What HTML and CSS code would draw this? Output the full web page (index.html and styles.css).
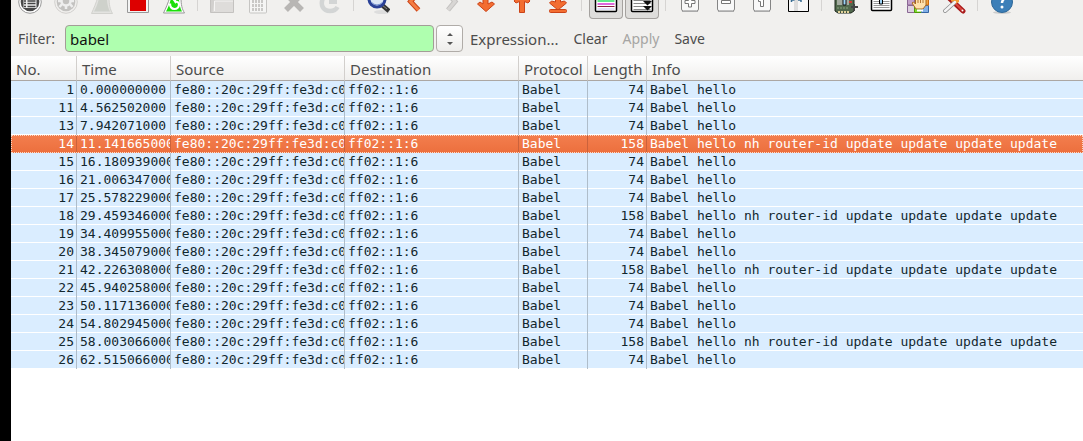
FILE: index.html
```html
<!DOCTYPE html>
<html lang="en">
<head>
<meta charset="utf-8">
<title>Packet capture</title>
<link rel="stylesheet" href="styles.css">
</head>
<body>
<main class="window">
  <div class="toolbar" role="toolbar" aria-label="Main">
    <button class="tool" aria-label="Interfaces"><svg class="icon" viewBox="0 0 24 15"><circle cx="12" cy="2" r="11.300" fill="#fff" stroke="#999"/><circle cx="12" cy="2" r="9.300" fill="#484848"/><path d="M5.500 0h13v8h-13z" fill="#eee"/><path d="M9.500 1h8M9.500 3.500h8M9.500 6.500h8M6 1h2M6 3.500h2M6 6.500h2" stroke="#444" stroke-width="1.500"/></svg></button>
    <button class="tool" aria-label="Options"><svg class="icon" viewBox="0 0 24 15"><circle cx="12" cy="2" r="11.300" fill="#f0efed" stroke="#d2d0ce"/><circle cx="12" cy="2" r="9.300" fill="#c3c2c0"/><circle cx="12" cy="1" r="4.500" fill="none" stroke="#eee" stroke-width="2.500"/><path d="M12 5v4M8 4L5.500 7M16 4l2.500 3M7 1H4M17 1h3" stroke="#eee" stroke-width="2.500"/></svg></button>
    <button class="tool" aria-label="Start"><svg class="icon" viewBox="0 0 24 15"><path d="M8-3C6 3 4 8 1.500 13.500h21C20 9 19 5 19-3z" fill="#e3e3e0" stroke="#d2d2ce"/><path d="M9-2C8 3 6 8 4 11.500h16C18 8 17 3 17-2z" fill="#ced1cb"/></svg></button>
    <button class="tool" aria-label="Stop"><svg class="icon" viewBox="0 0 24 15"><path d="M1.500-9h21v21.500h-21z" fill="#f3f3f3" stroke="#999"/><path d="M4-6h16v17H4z" fill="#d00"/></svg></button>
    <button class="tool" aria-label="Restart"><svg class="icon" viewBox="0 0 24 15"><path d="M8-3C6 3 4 8 1.500 13h21C20 9 19 5 19-3z" fill="#fff" stroke="#999"/><path d="M9-2C8 3 6 8 4 11.500h16C18 8 17 3 17-2z" fill="#1cdf0b"/><path d="M8 3.500C8 7 10 9 12.500 9S17 7 17 4.500 15 1.500 12.500 1.500" fill="none" stroke="#fff" stroke-width="2.200"/><path d="M9-2h5v6z" fill="#fff"/></svg></button>
    <span class="separator"></span>
    <button class="tool" aria-label="Open"><svg class="icon" viewBox="0 0 24 15"><path d="M.500-4h23v16.500H.500z" fill="#d2d0ce" stroke="#c4c2c0"/><path d="M4.500 1h18.500v11H2.500z" fill="#dedcda"/><path d="M4.500 11V1H23" fill="none" stroke="#f5f4f3"/></svg></button>
    <button class="tool" aria-label="Save capture"><svg class="icon" viewBox="0 0 24 15"><rect x="3.500" y="-8" width="17" height="21" rx="1" fill="#f5f5f4" stroke="#c6c5c3"/><path d="M6 1.500h12M6 5.500h12M6 9.500h12" stroke="#c9c8c6" stroke-width="3" stroke-dasharray="2 1"/></svg></button>
    <button class="tool" aria-label="Close"><svg class="icon" viewBox="0 0 24 15"><path d="M4-6l16 16M20-6L4 10" stroke="#b8b6b4" stroke-width="5.500"/></svg></button>
    <button class="tool" aria-label="Reload"><svg class="icon" viewBox="0 0 24 15"><path d="M5-2C2 5 5 11 12 11c4 0 6-1 7.500-4" fill="none" stroke="#d3d5d5" stroke-width="4.500"/><path d="M11-1h8v5h-8z" fill="#d3d5d5"/></svg></button>
    <span class="separator"></span>
    <button class="tool" aria-label="Find"><svg class="icon" viewBox="0 0 24 15"><ellipse cx="16" cy="12" rx="8" ry="2" fill="#ddd"/><path d="M16 5l7 6" stroke="#333" stroke-width="4.500"/><path d="M16 5l5 4" stroke="#888"/><circle cx="11" cy="-1" r="8" fill="#dce6f5" stroke="#2b4197" stroke-width="3"/><path d="M5 2q6 6 12 0" fill="none" stroke="#718ccc"/></svg></button>
    <button class="tool" aria-label="Back"><svg class="icon" viewBox="0 0 24 15"><path d="M15-6L8.500 1.500l8 8.500" fill="none" stroke="#cb4317" stroke-width="5"/><path d="M15-6L8.500 1.500l8 8.500" fill="none" stroke="#f47c43" stroke-width="3"/></svg></button>
    <button class="tool" aria-label="Forward"><svg class="icon" viewBox="0 0 24 15"><path d="M10-6l7 7.500-7 8.500" fill="none" stroke="#c4c2c0" stroke-width="5"/><path d="M10-6l7 7.500-7 8.500" fill="none" stroke="#d8d6d4" stroke-width="3"/></svg></button>
    <button class="tool" aria-label="Go to packet"><svg class="icon" viewBox="0 0 24 15"><path d="M9-2h5v6l4-2 2.500 2-8.500 7.500L3.500 4 6 2l3 2z" fill="#f36d31" stroke="#cb4317" stroke-linejoin="round"/></svg></button>
    <button class="tool" aria-label="First packet"><svg class="icon" viewBox="0 0 24 15"><path d="M9.500 12.500V1.500L6 3 4 1l8-9 8 9-2 2-3.500-1.500v11z" fill="#f36d31" stroke="#cb4317" stroke-linejoin="round"/></svg></button>
    <button class="tool" aria-label="Last packet"><svg class="icon" viewBox="0 0 24 15"><path d="M9.500-2h5v4l4-1 2 2-8.500 7L3.500 3l2-2 4 1z" fill="#f36d31" stroke="#cb4317" stroke-linejoin="round"/><rect x="3.500" y="9.500" width="17" height="3" rx="1" fill="#f36d31" stroke="#cb4317"/></svg></button>
    <span class="separator"></span>
    <button class="tool tool-pressed" aria-label="Colorize" aria-pressed="true"><svg class="icon" viewBox="0 0 24 15"><rect x="1.500" y="-9" width="21" height="20.500" rx="1" fill="#fff" stroke="#000" stroke-width="1.500"/><path d="M3.500 1h17" stroke="#62ec8d" stroke-width="2"/><path d="M3.500 4h17" stroke="#de6ade" stroke-width="2"/><path d="M3.500 6.500h17" stroke="#8d2144"/><path d="M3.500 9h17" stroke="#c9c9f5"/></svg></button>
    <button class="tool tool-pressed" aria-label="Auto scroll" aria-pressed="true"><svg class="icon" viewBox="0 0 24 15"><rect x="1.500" y="-9" width="21" height="20.500" rx="1" fill="#fff" stroke="#000" stroke-width="1.500"/><path d="M3.500.500h17M3.500 3.500h17M3.500 6.500h17M3.500 9.500h17" stroke="#888"/><path d="M13 1h9l-4.500 4.500zM13 6h9l-4.500 4.500z" fill="#111"/></svg></button>
    <span class="separator"></span>
    <button class="tool" aria-label="Zoom in"><svg class="icon" viewBox="0 0 24 15"><rect x="3.500" y="-7" width="17" height="18" rx="2" fill="#f8f8f8" stroke="#858585"/><path d="M4 11.500h16" stroke="#aaa"/><path d="M10.500-3h3v3.500h3.500v3h-3.500v3.500h-3v-3.500h-3.500v-3h3.500z" fill="#fff" stroke="#777"/></svg></button>
    <button class="tool" aria-label="Zoom out"><svg class="icon" viewBox="0 0 24 15"><rect x="3.500" y="-7" width="17" height="18" rx="2" fill="#f8f8f8" stroke="#858585"/><path d="M4 11.500h16" stroke="#aaa"/><path d="M7.500.500h9v3h-9z" fill="#fff" stroke="#777"/></svg></button>
    <button class="tool" aria-label="Normal size"><svg class="icon" viewBox="0 0 24 15"><rect x="3.500" y="-7" width="17" height="18" rx="2" fill="#f8f8f8" stroke="#858585"/><path d="M4 11.500h16" stroke="#aaa"/><path d="M10.500 6.500v-5h-2v-3h5v8z" fill="#fff" stroke="#777"/></svg></button>
    <button class="tool" aria-label="Resize columns"><svg class="icon" viewBox="0 0 24 15"><path d="M2.500-9h20v20.500h-20z" fill="#f7f7f7" stroke="#000"/><path d="M8 0h4v11H8z" fill="#ddd"/><path d="M5.500 2V0h3M15 2V0h-3" fill="none" stroke="#376b91" stroke-width="1.500"/></svg></button>
    <span class="separator"></span>
    <button class="tool" aria-label="Capture filters"><svg class="icon" viewBox="0 0 24 15"><path d="M1-5h19v16l-3 2H4l-3-2z" fill="#52694d" stroke="#1d271c"/><path d="M3 0h12v5H3z" fill="#a4aba0"/><path d="M9-1h3v6H9z" fill="#9fd4f5" stroke="#111"/><path d="M15 1h3v2h-3z" fill="#cf3c35"/><path d="M3 8h12" stroke="#8ca681" stroke-dasharray="2 1"/><path d="M4 12h12" stroke="#e2d29b" stroke-width="2" stroke-dasharray="2 1"/><path d="M17 7h7M20 4v7" stroke="#444" stroke-width="2"/></svg></button>
    <button class="tool" aria-label="Display filters"><svg class="icon" viewBox="0 0 24 15"><rect x="1.500" y="-9" width="20" height="19.500" rx="1" fill="#fff" stroke="#000" stroke-width="1.500"/><path d="M3.500 1.500h16M3.500 3.500h16M3.500 5.500h16M3.500 7.500h16" stroke="#999"/><path d="M9.500-2h3v6h-3z" fill="#9fd4f5" stroke="#000"/></svg></button>
    <button class="tool" aria-label="Coloring rules"><svg class="icon" viewBox="0 0 24 15"><path d="M1.500-3h7v8h-7z" fill="#c4a1ca" stroke="#8a6794"/><path d="M1.500 5.500h7v7h-7z" fill="#ddd1df" stroke="#8a6794"/><path d="M8.500 5.500h7v7h-7z" fill="#80dc32" stroke="#4e9a06"/><path d="M15.500 5.500h7v7h-7z" fill="#82b0e7" stroke="#3465a4"/><path d="M15.500-3h7v8h-7z" fill="#f4a23c" stroke="#ce6a0c"/><path d="M9.500-2v6l-2-2-1.500 1 4 6h7l3-4V-2z" fill="#ffe1ad" stroke="#a9681e"/><path d="M12-1v4M14.500-1v4M17-1v4" stroke="#b67632"/><path d="M11 9.500h6v2h-6z" fill="#fff"/></svg></button>
    <button class="tool" aria-label="Preferences"><svg class="icon" viewBox="0 0 24 15"><path d="M6-3l15 14" stroke="#a91919" stroke-width="5" stroke-linecap="round"/><path d="M7-3l13 13" stroke="#dd4840" stroke-width="2"/><path d="M10-3h7v5l-4 2-4-3z" fill="#f39b35"/><path d="M12 3l-9 8" stroke="#888" stroke-width="4" stroke-linecap="round"/><path d="M13 2L3 11" stroke="#f4f4f4" stroke-width="2.500" stroke-linecap="round"/><circle cx="20.500" cy="10.500" r="1" fill="#fff"/></svg></button>
    <span class="separator"></span>
    <button class="tool" aria-label="Help"><svg class="icon" viewBox="0 0 24 15"><ellipse cx="12" cy="12.500" rx="9" ry="1.500" fill="#ccc"/><circle cx="12" cy="2" r="10.500" fill="#3c7fb8" stroke="#2d6798"/><path d="M9-3q6-3 5 1c0 2-2 2-2 5" fill="none" stroke="#fff" stroke-width="2.500"/><circle cx="12" cy="7" r="1.500" fill="#fff"/></svg></button>
  </div>

  <form class="filter-bar">
    <label class="filter-label" for="filter">Filter:</label>
    <input class="filter-input" id="filter" type="text" value="babel" spellcheck="false">
    <span class="history">
      <select class="history-select" aria-label="Filter history"><option></option></select>
      <svg class="history-arrows" viewBox="0 0 8 14"><path d="M1 4h6L4 1zM1 10h6l-3 3z" fill="#555"/></svg>
    </span>
    <div class="actions">
      <button class="action" type="button">Expression...</button>
      <button class="action" type="button">Clear</button>
      <button class="action" type="button" disabled>Apply</button>
      <button class="action" type="button">Save</button>
    </div>
  </form>

  <div class="packet-pane">
    <table class="packets">
      <colgroup><col class="col-no"><col class="col-time"><col class="col-address"><col class="col-address"><col class="col-protocol"><col class="col-length"><col></colgroup>
      <thead><tr><th>No.</th><th>Time</th><th>Source</th><th>Destination</th><th>Protocol</th><th>Length</th><th>Info</th></tr></thead>
      <tbody>
        <tr><td class="num">1</td><td>0.000000000</td><td>fe80::20c:29ff:fe3d:c0</td><td>ff02::1:6</td><td>Babel</td><td class="num">74</td><td>Babel hello</td></tr>
        <tr><td class="num">11</td><td>4.562502000</td><td>fe80::20c:29ff:fe3d:c0</td><td>ff02::1:6</td><td>Babel</td><td class="num">74</td><td>Babel hello</td></tr>
        <tr><td class="num">13</td><td>7.942071000</td><td>fe80::20c:29ff:fe3d:c0</td><td>ff02::1:6</td><td>Babel</td><td class="num">74</td><td>Babel hello</td></tr>
        <tr class="selected"><td class="num">14</td><td>11.141665000</td><td>fe80::20c:29ff:fe3d:c0</td><td>ff02::1:6</td><td>Babel</td><td class="num">158</td><td>Babel hello nh router-id update update update update</td></tr>
        <tr><td class="num">15</td><td>16.180939000</td><td>fe80::20c:29ff:fe3d:c0</td><td>ff02::1:6</td><td>Babel</td><td class="num">74</td><td>Babel hello</td></tr>
        <tr><td class="num">16</td><td>21.006347000</td><td>fe80::20c:29ff:fe3d:c0</td><td>ff02::1:6</td><td>Babel</td><td class="num">74</td><td>Babel hello</td></tr>
        <tr><td class="num">17</td><td>25.578229000</td><td>fe80::20c:29ff:fe3d:c0</td><td>ff02::1:6</td><td>Babel</td><td class="num">74</td><td>Babel hello</td></tr>
        <tr><td class="num">18</td><td>29.459346000</td><td>fe80::20c:29ff:fe3d:c0</td><td>ff02::1:6</td><td>Babel</td><td class="num">158</td><td>Babel hello nh router-id update update update update</td></tr>
        <tr><td class="num">19</td><td>34.409955000</td><td>fe80::20c:29ff:fe3d:c0</td><td>ff02::1:6</td><td>Babel</td><td class="num">74</td><td>Babel hello</td></tr>
        <tr><td class="num">20</td><td>38.345079000</td><td>fe80::20c:29ff:fe3d:c0</td><td>ff02::1:6</td><td>Babel</td><td class="num">74</td><td>Babel hello</td></tr>
        <tr><td class="num">21</td><td>42.226308000</td><td>fe80::20c:29ff:fe3d:c0</td><td>ff02::1:6</td><td>Babel</td><td class="num">158</td><td>Babel hello nh router-id update update update update</td></tr>
        <tr><td class="num">22</td><td>45.940258000</td><td>fe80::20c:29ff:fe3d:c0</td><td>ff02::1:6</td><td>Babel</td><td class="num">74</td><td>Babel hello</td></tr>
        <tr><td class="num">23</td><td>50.117136000</td><td>fe80::20c:29ff:fe3d:c0</td><td>ff02::1:6</td><td>Babel</td><td class="num">74</td><td>Babel hello</td></tr>
        <tr><td class="num">24</td><td>54.802945000</td><td>fe80::20c:29ff:fe3d:c0</td><td>ff02::1:6</td><td>Babel</td><td class="num">74</td><td>Babel hello</td></tr>
        <tr><td class="num">25</td><td>58.003066000</td><td>fe80::20c:29ff:fe3d:c0</td><td>ff02::1:6</td><td>Babel</td><td class="num">158</td><td>Babel hello nh router-id update update update update</td></tr>
        <tr><td class="num">26</td><td>62.515066000</td><td>fe80::20c:29ff:fe3d:c0</td><td>ff02::1:6</td><td>Babel</td><td class="num">74</td><td>Babel hello</td></tr>
      </tbody>
    </table>
  </div>
</main>
</body>
</html>
```
FILE: styles.css
```css
* {
  box-sizing: border-box;
}

body {
  margin: 0;
  padding-left: 11px;
  background: #000;
  color: #4c4c4c;
  font: 15px/20px "Noto Sans", "Open Sans", sans-serif;
}

button,
input,
select {
  margin: 0;
  font: inherit;
  color: inherit;
}

.window {
  display: flex;
  flex-direction: column;
  min-height: 100vh;
  background: #f1f0ee;
}

.toolbar {
  display: flex;
  padding: 0 1px 6px;
  overflow: hidden;
}

.tool {
  display: flex;
  flex: none;
  justify-content: center;
  width: 34px;
  margin: 0 1px;
  padding: 0 0 3px;
  border: 1px solid transparent;
  border-top: 0;
  border-radius: 0 0 4px 4px;
  background: none;
}

.tool-pressed {
  border-color: #a5a29f;
  background: #dedddb;
}

.icon {
  flex: none;
  width: 24px;
  height: 15px;
}

.separator {
  flex: none;
  width: 12px;
  height: 11px;
  background: linear-gradient(#d6d4d2, #d6d4d2) 5px 0 / 1px 100% no-repeat;
}

.filter-bar {
  display: flex;
  align-items: center;
  padding: 0 7px 4px;
}

.filter-label {
  width: 47px;
  font-size: 14px;
}

.filter-input {
  width: 369px;
  height: 27px;
  padding: 0 4px;
  border: 1px solid #a39d97;
  border-radius: 4px;
  outline: 0;
  background: #afffaf;
  color: #111;
}

.history {
  display: grid;
  place-items: center;
  width: 27px;
  height: 27px;
  margin: 0 7px 0 2px;
}

.history > * {
  grid-area: 1 / 1;
}

.history-select {
  width: 100%;
  height: 100%;
  border: 1px solid #b0aca8;
  border-radius: 4px;
  appearance: none;
  background: linear-gradient(#fff, #eeedeb);
}

.history-arrows {
  width: 8px;
  height: 14px;
  pointer-events: none;
}

.actions {
  display: flex;
  gap: 15px;
  font-size: 14px;
}

.action {
  padding: 0;
  border: 0;
  background: none;
}

.action:first-child {
  font-size: 15px;
}

.action:disabled {
  color: #a6a5a3;
}

.packet-pane {
  flex: 1;
  background: #fff;
}

.packets {
  width: 100%;
  table-layout: fixed;
  border-spacing: 0;
}

.col-no {
  width: 66px;
}

.col-time {
  width: 94px;
}

.col-address {
  width: 174px;
}

.col-protocol {
  width: 69px;
}

.col-length {
  width: 59px;
}

th,
td {
  overflow: hidden;
  white-space: nowrap;
  border-right: 1px solid #d2cfcc;
}

th {
  height: 25px;
  padding: 1px 0 0 5px;
  border-bottom: 1px solid #aca7a3;
  background: linear-gradient(#fff, #f0efed);
  font-weight: 400;
  text-align: left;
}

td {
  height: 18px;
  padding: 0 2px 0 3px;
  border-color: #afbdca;
  background: #daedff;
  box-shadow: inset 0 -1px #fff;
  color: #12272e;
  font: 13px/18px "DejaVu Sans Mono", monospace;
}

th:last-child,
td:last-child {
  border-right: 0;
}

.num {
  text-align: right;
}

.selected {
  outline: 1px dotted #fbd9c8;
  outline-offset: -1px;
}

.selected td {
  border-color: #cb623b;
  background: linear-gradient(#f37e4e, #ec6f3d);
  box-shadow: none;
  color: #fff;
}
```
